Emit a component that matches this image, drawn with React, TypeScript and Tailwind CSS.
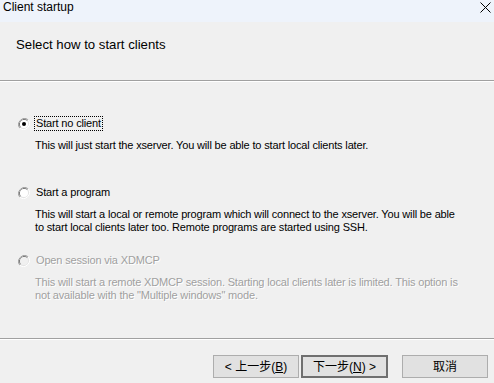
import React from "react";

function Radio({ checked = false, disabled = false }: { checked?: boolean; disabled?: boolean }) {
  return (
    <svg width="12" height="12" viewBox="0 0 12 12" className="shrink-0">
      {/* outer ring: top-left shadow, bottom-right highlight */}
      <path d="M10.2 1.8 A6 6 0 0 0 1.8 10.2" fill="none" stroke="#a0a0a0" strokeWidth="1" />
      <path d="M1.8 10.2 A6 6 0 0 0 10.2 1.8" fill="none" stroke="#ffffff" strokeWidth="1" />
      <path d="M9.5 2.5 A5 5 0 0 0 2.5 9.5" fill="none" stroke="#696969" strokeWidth="1" />
      <path d="M2.5 9.5 A5 5 0 0 0 9.5 2.5" fill="none" stroke="#e3e3e3" strokeWidth="1" />
      <circle cx="6" cy="6" r="4" fill={disabled ? "#f0f0f0" : "#ffffff"} />
      {checked && <circle cx="6" cy="6" r="2" fill="#000000" />}
    </svg>
  );
}

function Option({
  label,
  lines,
  checked,
  disabled,
  focused,
  gap,
}: {
  label: string;
  lines: string[];
  checked?: boolean;
  disabled?: boolean;
  focused?: boolean;
  gap: string;
}) {
  const tone = disabled ? "text-[#a0a0a0] [text-shadow:1px_1px_0_#ffffff]" : "text-black";
  return (
    <div className={gap}>
      <div className="flex items-center h-[15px]">
        <Radio checked={checked} disabled={disabled} />
        <span
          className={`ml-[4px] px-[1px] leading-[13px] border border-dotted ${
            focused ? "border-black" : "border-transparent"
          } ${tone}`}
        >
          {label}
        </span>
      </div>
      <div className={`mt-[8px] ml-[17px] leading-[13px] ${tone}`}>
        {lines.map((l) => (
          <div key={l} className="whitespace-nowrap">
            {l}
          </div>
        ))}
      </div>
    </div>
  );
}

export default function App() {
  return (
    <div className="w-[494px] h-[383px] bg-[#f0f0f0] flex flex-col overflow-hidden font-['Liberation_Sans','Noto_Sans_CJK_SC',sans-serif]">
      {/* title bar */}
      <div className="h-[22px] bg-[#eef3fb] flex items-start justify-between shrink-0">
        <span className="pl-[3px] text-[12px] leading-[14px] text-black">Client startup</span>
        <svg width="11" height="11" viewBox="0 0 11 11" className="mr-[3px] mt-[2px]">
          <path d="M0.5 0.5 L10.5 10.5 M10.5 0.5 L0.5 10.5" stroke="#000" strokeWidth="1" />
        </svg>
      </div>

      {/* header */}
      <div className="h-[58px] shrink-0 pl-[16px] pt-[10px]">
        <span className="text-[13.2px] leading-[16px] text-black">Select how to start clients</span>
      </div>
      <div className="h-[2px] shrink-0 border-t border-[#a0a0a0] border-b border-b-white" />

      {/* options */}
      <div className="h-[256px] shrink-0 pl-[18px] pt-[34px] text-[11px] tracking-[-0.16px]">
        <Option
          gap=""
          checked
          focused
          label="Start no client"
          lines={["This will just start the xserver. You will be able to start local clients later."]}
        />
        <Option
          gap="mt-[33px]"
          label="Start a program"
          lines={[
            "This will start a local or remote program which will connect to the xserver. You will be able",
            "to start local clients later too. Remote programs are started using SSH.",
          ]}
        />
        <Option
          gap="mt-[19px]"
          disabled
          label="Open session via XDMCP"
          lines={[
            "This will start a remote XDMCP session. Starting local clients later is limited. This option is",
            'not available with the "Multiple windows" mode.',
          ]}
        />
      </div>
      <div className="h-[2px] shrink-0 border-t border-[#a0a0a0] border-b border-b-white" />

      {/* buttons */}
      <div className="flex pt-[15px] text-[12px]">
        <button className="ml-[213px] w-[86px] h-[23px] bg-[#e1e1e1] border border-[#adadad] flex items-center justify-center text-black">
          &lt; 上一步(<span className="underline">B</span>)
        </button>
        <button className="ml-[2px] w-[87px] h-[23px] bg-[#e1e1e1] border-2 border-[#6f6f6f] flex items-center justify-center text-black">
          下一步(<span className="underline">N</span>) &gt;
        </button>
        <button className="ml-[14px] w-[86px] h-[23px] bg-[#e1e1e1] border border-[#adadad] flex items-center justify-center text-black">
          取消
        </button>
      </div>
    </div>
  );
}
